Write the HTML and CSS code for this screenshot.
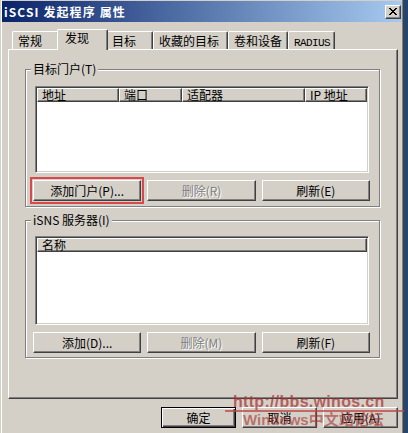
FILE: index.html
```html
<!DOCTYPE html>
<html lang="zh-CN">
<head>
<meta charset="utf-8">
<title>iSCSI 发起程序 属性</title>
<link rel="stylesheet" href="styles.css">
</head>
<body>
<div class="desktop">
  <div class="window">
    <div class="titlebar">
      <span class="title">iSCSI 发起程序 属性</span>
      <span class="close">
        <svg width="8" height="7" viewBox="0 0 8 7" shape-rendering="crispEdges"><path fill="#000" d="M0 0h2v1H0zM6 0h2v1H6zM1 1h2v1H1zM5 1h2v1H5zM2 2h4v1H2zM3 3h2v1H3zM2 4h4v1H2zM1 5h2v1H1zM5 5h2v1H5zM0 6h2v1H0zM6 6h2v1H6z"/></svg>
      </span>
    </div>
    <div class="tabs">
      <div class="tab t-general">常规</div>
      <div class="tab active t-discovery">发现</div>
      <div class="tab t-targets">目标</div>
      <div class="tab t-fav">收藏的目标</div>
      <div class="tab t-vol">卷和设备</div>
      <div class="tab t-radius"><span class="latin">RADIUS</span></div>
    </div>
    <div class="panel">
      <div class="group portals">
        <span class="legend">目标门户(T)</span>
        <div class="list portal-list">
          <div class="lv-header">
            <div class="col c-addr">地址</div>
            <div class="col c-port">端口</div>
            <div class="col c-adapter">适配器</div>
            <div class="col c-ip">IP 地址</div>
          </div>
        </div>
        <div class="btn-row">
          <button class="btn marked">添加门户(P)...</button>
          <button class="btn" disabled>删除(R)</button>
          <button class="btn">刷新(E)</button>
        </div>
      </div>
      <div class="group isns">
        <span class="legend">iSNS 服务器(I)</span>
        <div class="list isns-list">
          <div class="lv-header">
            <div class="col c-name">名称</div>
          </div>
        </div>
        <div class="btn-row">
          <button class="btn">添加(D)...</button>
          <button class="btn" disabled>删除(M)</button>
          <button class="btn">刷新(F)</button>
        </div>
      </div>
    </div>
    <div class="footer">
      <button class="btn default">确定</button>
      <button class="btn">取消</button>
      <button class="btn">应用(A)</button>
    </div>
  </div>
  <div class="watermark">
    <span class="wm-url">http://bbs.winos.cn</span>
    <span class="wm-rule"></span>
    <span class="wm-name">Windows中文站论坛</span>
  </div>
</div>
</body>
</html>
```
FILE: styles.css
```css
* { box-sizing: border-box; }
html, body { margin: 0; padding: 0; }
body {
  width: 408px;
  height: 433px;
  overflow: hidden;
  background: #24466E;
  font-family: "Noto Sans CJK SC", "Liberation Sans", sans-serif;
  font-size: 12px;
  color: #000;
}
.desktop { position: relative; width: 408px; height: 433px; }

.window {
  width: 404px;
  height: 433px;
  background: #D4D0C8;
  border-left: 1px solid #D4D0C8;
  border-right: 1px solid #404040;
  box-shadow: inset 1px 0 #fff, inset -1px 0 #808080;
  padding: 1px 1px 0 1px;
  display: flex;
  flex-direction: column;
}

.titlebar {
  height: 21px;
  flex: none;
  background: linear-gradient(to right, #0A246A, #A6CAF0);
  color: #fff;
  display: flex;
  align-items: center;
  justify-content: space-between;
  padding: 0 1px 0 2px;
}
.title { font-weight: bold; letter-spacing: 1.1px; line-height: 14px; }
.close {
  width: 16px;
  height: 14px;
  background: #D4D0C8;
  border: 1px solid;
  border-color: #fff #404040 #404040 #fff;
  box-shadow: inset -1px -1px #808080;
  display: flex;
  align-items: center;
  justify-content: center;
}
.close svg { display: block; }

.tabs {
  display: flex;
  align-items: flex-end;
  height: 20px;
  flex: none;
  margin: 7px 0 0 10px;
}
.tab {
  height: 18px;
  padding: 2px 0 0 5px;
  line-height: 14px;
  background: #D4D0C8;
  border-top: 1px solid #fff;
  border-left: 1px solid #fff;
  border-right: 1px solid #404040;
  box-shadow: inset -1px 0 #808080;
  border-radius: 2px 2px 0 0;
  white-space: nowrap;
}
.tab.active {
  height: 21px;
  margin: 0 -2px -1px;
  padding: 1px 0 0 7px;
  position: relative;
  z-index: 1;
}
.t-general { width: 47px; }
.t-discovery { width: 51px; }
.t-targets { width: 47px; }
.t-fav { width: 75px; }
.t-vol { width: 60px; }
.t-radius { width: 47px; }
.latin {
  font-family: "Liberation Mono", monospace;
  font-size: 11px;
  letter-spacing: -0.6px;
}

.panel {
  width: 390px;
  height: 350px;
  flex: none;
  margin-left: 6px;
  border: 1px solid;
  border-color: #fff #404040 #404040 #fff;
  box-shadow: inset -1px -1px #808080;
  display: flex;
  flex-direction: column;
}

.group {
  position: relative;
  width: 355px;
  margin-left: 16px;
  border: 1px solid #808080;
  box-shadow: inset 1px 1px #fff, 1px 1px #fff;
}
.portals { margin-top: 19px; padding: 16px 0 5px 7px; }
.isns { margin-top: 13px; padding: 15px 0 4px 7px; }
.legend {
  position: absolute;
  left: 5px;
  top: -8px;
  padding: 0 2px;
  background: #D4D0C8;
  line-height: 14px;
  white-space: nowrap;
}

.list {
  width: 334px;
  margin-left: 2px;
  background: #fff;
  border: 1px solid;
  border-color: #808080 #fff #fff #808080;
  box-shadow: inset 1px 1px #404040, inset -1px -1px #D4D0C8;
  padding: 1px;
}
.portal-list { height: 87px; }
.isns-list { height: 89px; }
.lv-header { display: flex; height: 14px; }
.col {
  height: 14px;
  background: #D4D0C8;
  border: 1px solid;
  border-color: #fff #404040 #404040 #fff;
  box-shadow: inset -1px -1px #808080;
  padding-left: 4px;
  line-height: 11px;
  white-space: nowrap;
}
.c-addr { width: 82px; }
.c-port { width: 63px; }
.c-adapter { width: 123px; }
.c-ip { flex: 1; }
.c-name { flex: 1; }

.btn-row {
  display: flex;
  gap: 6px;
  width: 337px;
  margin-top: 7px;
}
.btn {
  flex: 1;
  height: 21px;
  margin: 0;
  padding: 0;
  background: #D4D0C8;
  border: 1px solid;
  border-color: #fff #404040 #404040 #fff;
  box-shadow: inset -1px -1px #808080;
  font-family: inherit;
  font-size: 12px;
  line-height: 14px;
  color: #000;
}
.btn:disabled { color: #808080; text-shadow: 1px 1px #fff; }
.btn.marked { outline: 2px solid #D9484A; outline-offset: 1px; }

.footer {
  display: flex;
  justify-content: flex-end;
  gap: 6px;
  margin: 8px 4px 0 0;
}
.footer .btn { flex: none; width: 75px; }
.btn.default {
  border-color: #000;
  box-shadow: inset 1px 1px #fff, inset -1px -1px #404040, inset -2px -2px #808080;
}

.watermark {
  position: absolute;
  left: 225px;
  top: 393px;
  width: 179px;
  height: 40px;
  pointer-events: none;
}
.wm-url {
  position: absolute;
  left: 8px;
  top: 0;
  font-family: "Liberation Sans", sans-serif;
  font-weight: bold;
  font-size: 16px;
  line-height: 18px;
  letter-spacing: 0.3px;
  color: rgba(168, 48, 48, 0.72);
  white-space: nowrap;
}
.wm-rule {
  position: absolute;
  left: 0;
  top: 17px;
  width: 179px;
  height: 2px;
  background: rgba(190, 70, 70, 0.75);
}
.wm-name {
  position: absolute;
  left: 18px;
  top: 18px;
  font-family: "Liberation Sans", "Noto Sans CJK SC", sans-serif;
  font-weight: bold;
  font-size: 15px;
  line-height: 18px;
  color: rgba(168, 48, 48, 0.62);
  white-space: nowrap;
}
```
